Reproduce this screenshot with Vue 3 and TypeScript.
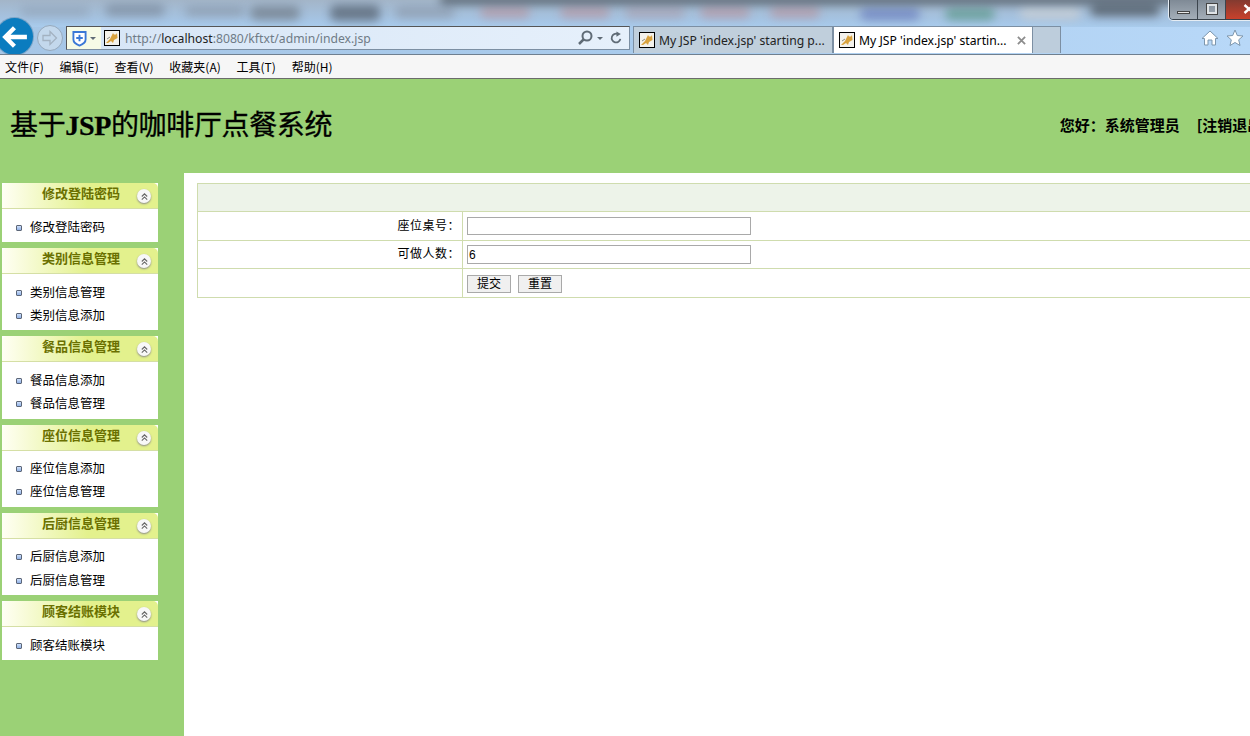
<script setup lang="ts">
const menus = ['文件(F)', '编辑(E)', '查看(V)', '收藏夹(A)', '工具(T)', '帮助(H)']
const groups = [
  { title: '修改登陆密码', items: ['修改登陆密码'] },
  { title: '类别信息管理', items: ['类别信息管理', '类别信息添加'] },
  { title: '餐品信息管理', items: ['餐品信息添加', '餐品信息管理'] },
  { title: '座位信息管理', items: ['座位信息添加', '座位信息管理'] },
  { title: '后厨信息管理', items: ['后厨信息添加', '后厨信息管理'] },
  { title: '顾客结账模块', items: ['顾客结账模块'] },
]
const blurs = [
  { l: 20, t: 6, w: 70, h: 10, c: '#93a6bb' }, { l: 105, t: 4, w: 60, h: 12, c: '#7f8fa2' }, { l: 185, t: 6, w: 60, h: 10, c: '#8b9bae' },
  { l: 250, t: 6, w: 50, h: 14, c: '#75818e' }, { l: 330, t: 5, w: 50, h: 16, c: '#5b6877' }, { l: 395, t: 6, w: 60, h: 12, c: '#8e9db0' },
  { l: 480, t: 6, w: 50, h: 12, c: '#b39aa8' }, { l: 560, t: 6, w: 50, h: 12, c: '#b39aa8' }, { l: 625, t: 6, w: 60, h: 12, c: '#a8a4b6' },
  { l: 700, t: 6, w: 50, h: 12, c: '#b39aa8' }, { l: 770, t: 6, w: 50, h: 12, c: '#b39aa8' }, { l: 860, t: 8, w: 60, h: 12, c: '#6d82c0' },
  { l: 945, t: 8, w: 50, h: 12, c: '#5f9a8e' }, { l: 1020, t: 6, w: 60, h: 14, c: '#c6ced6' }, { l: 1090, t: 4, w: 70, h: 12, c: '#4c5660' },
  { l: 440, t: -4, w: 780, h: 8, c: '#3f4a55' },
]
</script>

<template>
  <div class="page">
    <header class="chrome">
      <div class="blur-layer">
        <span v-for="b in blurs" :key="b.l" class="blur" :style="{ left: b.l + 'px', top: b.t + 'px', width: b.w + 'px', height: b.h + 'px', background: b.c }"></span>
      </div>
      <div class="win-btns">
        <span class="win min"><i></i></span>
        <span class="win max"><i></i></span>
        <span class="win close">
          <svg viewBox="0 0 12 12" width="12" height="12"><path d="M1.500 2 L10.500 10 M10.500 2 L1.500 10" stroke="#fff" stroke-width="2.400"/></svg>
        </span>
      </div>
      <div class="nav">
        <div class="back">
          <svg viewBox="0 0 24 24" width="26" height="26"><path d="M11.500 3.500 L3 12 L11.500 20.500 M3.500 12 H23" fill="none" stroke="#fff" stroke-width="4"/></svg>
        </div>
        <div class="forward">
          <svg viewBox="0 0 20 20" width="20" height="20"><path d="M10 3.500 L16.500 10 L10 16.500 V12.500 H3 V7.500 H10 Z" fill="none" stroke="#a3b2c1" stroke-width="1.300"/></svg>
        </div>
        <div class="address">
          <div class="shield">
            <svg viewBox="0 0 16 18" width="15" height="17"><path d="M1.500 2 H14.500 V10 Q14.500 14 8 16.500 Q1.500 14 1.500 10 Z" fill="#fff" stroke="#3a78d6" stroke-width="2"/><path d="M8 5 V12 M4.500 8.500 H11.500" stroke="#3a78d6" stroke-width="2"/></svg>
            <span class="caret"></span>
          </div>
          <svg class="fav" viewBox="0 0 16 16" width="16" height="16"><rect x=".5" y=".5" width="15" height="15" fill="#f4f2ec" stroke="#000"/><path d="M2 13 L6 9 L8 5 L9 3 L10 4.500 L12 4.500 L13 3 L13.500 8 L10 10 L9 13 L7 11 L4 13 Z" fill="#d9a23d"/><path d="M3 9 L6 7" stroke="#8a8a80"/></svg>
          <span class="url"><span class="dim">http://</span>localhost<span class="dim">:8080/kftxt/admin/index.jsp</span></span>
          <svg class="tool" viewBox="0 0 16 16" width="16" height="16"><circle cx="10" cy="6" r="4.500" fill="none" stroke="#5f6b76" stroke-width="2"/><path d="M7 9 L2 14" stroke="#5f6b76" stroke-width="2.500"/></svg>
          <span class="caret"></span>
          <svg class="tool refresh" viewBox="0 0 16 16" width="14" height="14"><path d="M13 9 A5 5 0 1 1 10 3.500" fill="none" stroke="#5f6b76" stroke-width="2"/><path d="M8.500 0.500 L13.500 3.500 L8.500 6.500 Z" fill="#5f6b76"/></svg>
        </div>
        <div class="tab inactive">
          <svg class="fav" viewBox="0 0 16 16" width="16" height="16"><rect x=".5" y=".5" width="15" height="15" fill="#f4f2ec" stroke="#000"/><path d="M2 13 L6 9 L8 5 L9 3 L10 4.500 L12 4.500 L13 3 L13.500 8 L10 10 L9 13 L7 11 L4 13 Z" fill="#d9a23d"/><path d="M3 9 L6 7" stroke="#8a8a80"/></svg>
          <span class="tab-text">My JSP 'index.jsp' starting p...</span>
        </div>
        <div class="tab active">
          <svg class="fav" viewBox="0 0 16 16" width="16" height="16"><rect x=".5" y=".5" width="15" height="15" fill="#f4f2ec" stroke="#000"/><path d="M2 13 L6 9 L8 5 L9 3 L10 4.500 L12 4.500 L13 3 L13.500 8 L10 10 L9 13 L7 11 L4 13 Z" fill="#d9a23d"/><path d="M3 9 L6 7" stroke="#8a8a80"/></svg>
          <span class="tab-text">My JSP 'index.jsp' startin...</span>
          <svg class="tab-x" viewBox="0 0 10 10" width="9" height="9"><path d="M1 1 L9 9 M9 1 L1 9" stroke="#8d8d8d" stroke-width="2"/></svg>
        </div>
        <div class="new-tab"></div>
        <div class="right-icons">
          <svg viewBox="0 0 18 18" width="18" height="18"><path d="M9 2 L17 9.500 H14.500 V16 H11 V11 H7 V16 H3.500 V9.500 H1 Z" fill="#fff" stroke="#7d96ad"/></svg>
          <svg viewBox="0 0 18 18" width="18" height="18"><path d="M9 1 L11.300 6.500 L17 7 L12.700 10.800 L14 16.500 L9 13.500 L4 16.500 L5.300 10.800 L1 7 L6.700 6.500 Z" fill="#fff" stroke="#7d96ad"/></svg>
        </div>
      </div>
      <nav class="menu">
        <span v-for="m in menus" :key="m">{{ m }}</span>
      </nav>
    </header>

    <div class="banner">
      <h1 class="title">基于<b>JSP</b>的咖啡厅点餐系统</h1>
      <div class="user">
        <span>您好：系统管理员</span>
        <span class="logout">[注销退出]</span>
      </div>
    </div>

    <div class="body">
      <aside class="side">
        <section v-for="g in groups" :key="g.title" class="group">
          <div class="group-head">
            <span class="group-title">{{ g.title }}</span>
            <span class="collapse">
              <svg viewBox="0 0 10 10" width="9" height="9"><path d="M2 5 L5 2 L8 5 M2 8.500 L5 5.500 L8 8.500" fill="none" stroke="#666" stroke-width="1.200"/></svg>
            </span>
          </div>
          <ul class="items">
            <li v-for="i in g.items" :key="i"><span class="bullet"></span>{{ i }}</li>
          </ul>
        </section>
      </aside>
      <main class="main">
        <table class="form">
          <colgroup>
            <col class="col-label" />
            <col />
          </colgroup>
          <tbody>
            <tr class="head"><td colspan="2"></td></tr>
            <tr class="row-a"><td class="label">座位桌号：</td><td class="field"><input class="inp" type="text" value="" /></td></tr>
            <tr class="row-b"><td class="label">可做人数：</td><td class="field"><input class="inp" type="text" value="6" /></td></tr>
            <tr class="row-c"><td class="label"></td><td class="field"><button class="btn">提交</button><button class="btn">重置</button></td></tr>
          </tbody>
        </table>
      </main>
    </div>
  </div>
</template>

<style>
html, body { margin: 0; padding: 0; overflow: hidden; background: #fff; }
</style>

<style scoped>
.page {
  width: 1250px;
  height: 736px;
  display: flex;
  flex-direction: column;
  overflow: hidden;
  font-family: "Noto Sans CJK SC", "Liberation Sans", sans-serif;
  font-size: 12px;
  color: #000;
}
.chrome {
  position: relative;
  height: 79px;
  flex: none;
  display: flex;
  flex-direction: column;
  justify-content: flex-end;
  background: linear-gradient(90deg, #a6c6e6 0%, #a9cbec 50%, #b8d8f8 100%);
  overflow: hidden;
}
.blur-layer { position: absolute; inset: 0 0 auto 0; height: 27px; overflow: hidden; background: linear-gradient(180deg, #a3b5c8 0, #a5c3e2 70%, #a9cbec 100%); }
.blur { position: absolute; filter: blur(5px); opacity: .8; border-radius: 6px; }
.win-btns { position: absolute; top: -2px; left: 1169px; display: flex; width: 110px; height: 20px; border: 1px solid #38414a; border-radius: 0 0 4px 4px; overflow: hidden; box-shadow: 0 0 0 1px #e6edf4; }
.win { display: flex; align-items: center; justify-content: center; height: 20px; box-sizing: border-box; background: linear-gradient(180deg, #7d8894, #a4aeb8); border-right: 1px solid #3c454e; width: 28px; }
.win.close { flex: 1; justify-content: flex-start; padding-left: 17px; background: linear-gradient(180deg, #7f3a30, #c9412c); border: 0; }
.min i { display: block; width: 11px; height: 1px; background: #e8e8e8; margin-top: 6px; border: 1px solid #444; }
.max i { display: block; width: 6px; height: 6px; border: 2px solid #dfe3e6; outline: 1px solid #444; }
.nav { position: relative; height: 27px; display: flex; align-items: center; }
.back { position: absolute; left: -4px; top: -9px; width: 37px; height: 37px; border-radius: 50%; background: #0b7cbf; display: flex; align-items: center; justify-content: center; overflow: hidden; box-shadow: 0 0 0 1px #7ea6c8; }
.forward { position: absolute; left: 37px; top: -2px; width: 26px; height: 26px; box-sizing: border-box; border: 1px solid #96a9bc; border-radius: 50%; display: flex; align-items: center; justify-content: center; background: #c3d8ec; }
.address {
  position: absolute; left: 66px; top: -1px; width: 564px; height: 24px;
  box-sizing: border-box; border: 1px solid #7c8fa3; border-left-color: #555; border-top-color: #555;
  background: linear-gradient(90deg, #d6e5f6, #e6f0fb);
  display: flex; align-items: center;
}
.shield { width: 34px; height: 22px; background: #f6fbe6; display: flex; align-items: center; gap: 3px; padding-left: 5px; box-sizing: border-box; flex: none; }
.caret { display: block; width: 0; height: 0; border: 3px solid transparent; border-top: 3px solid #5f6b76; border-bottom: 0; flex: none; }
.address .fav { margin-left: 3px; flex: none; }
.url { font-family: "Noto Sans", "Liberation Sans", sans-serif; font-size: 12.200px; margin-left: 5px; color: #222; flex: 1; white-space: nowrap; }
.dim { color: #6f7b86; }
.tool { flex: none; }
.address > .caret { margin: 0 6px 0 4px; }
.refresh { margin-right: 6px; }
.tab {
  position: absolute; top: -1px; height: 27px; width: 200px; box-sizing: border-box;
  display: flex; align-items: center; padding-left: 5px;
  font-family: "Noto Sans", "Liberation Sans", sans-serif; font-size: 12.200px; color: #222;
  border: 1px solid #7c8fa3; border-bottom: 0;
}
.tab .fav { flex: none; }
.tab-text { margin-left: 4px; white-space: nowrap; }
.inactive { left: 633px; background: #c0cfdc; }
.active { left: 833px; background: #fff; color: #000; }
.tab-x { margin-left: 10px; flex: none; }
.new-tab { position: absolute; left: 1033px; top: -1px; width: 28px; height: 27px; background: #bdcddc; border: 1px solid #7c8fa3; border-left: 0; border-bottom: 0; box-sizing: border-box; }
.right-icons { position: absolute; left: 1201px; top: 2px; display: flex; gap: 7px; }
.menu {
  height: 25px; box-sizing: border-box; flex: none;
  background: #f6f6f6; border-top: 1px solid #6f7f8f; border-bottom: 1px solid #6b6b6b;
  display: flex; align-items: center; padding-left: 5px; gap: 15.800px;
  position: relative; font-size: 12px;
}
.banner {
  height: 94px; flex: none; box-sizing: border-box;
  background: #9bd176;
  display: flex; align-items: center; justify-content: space-between;
  padding: 0 0 0 10px; white-space: nowrap; overflow: hidden;
}
.title { margin: 0 0 6px; font-size: 28px; font-weight: 400; -webkit-text-stroke: .3px #000; letter-spacing: -.35px; font-family: "Noto Sans CJK SC", sans-serif; }
.title b { font-family: "Liberation Serif", serif; font-weight: 700; }
.user { display: flex; gap: 17px; font-size: 15px; font-weight: 700; margin-right: -18px; margin-bottom: 4px; }
.body { flex: 1; display: flex; min-height: 0; }
.side { width: 184px; flex: none; background: #9bd176; padding: 10px 26px 0 2px; box-sizing: border-box; display: flex; flex-direction: column; gap: 6px; }
.group { background: #fff; }
.group-head {
  height: 26px; box-sizing: border-box; position: relative;
  background: linear-gradient(90deg, #fffff4 0, #e3f18d 55%, #e3f18d 100%);
  border-radius: 5px 5px 0 0; border-bottom: 1px solid #d5dfa5;
  display: flex; align-items: center; justify-content: center;
  padding: 0 0 6px 2px;
}
.group-title { font-size: 13px; font-weight: 700; color: #6a7000; }
.collapse { position: absolute; right: 7px; top: 6px; width: 14px; height: 14px; border-radius: 50%; background: #f8f8f8; box-shadow: 0 1px 2px #888; display: flex; align-items: center; justify-content: center; }
.items { list-style: none; margin: 0; padding: 5.500px 0 4.250px; }
.items li { height: 23.250px; display: flex; align-items: center; padding-left: 14px; font-size: 12.500px; }
.bullet { width: 4px; height: 4px; background: linear-gradient(180deg, #cfe0fa, #8fb0e6); border: 1px solid #5c6678; border-radius: 1px; margin-right: 8px; flex: none; margin-top: 3px; }
.main { flex: 1; background: #fff; padding: 10px 0 0 13px; overflow: hidden; }
.form { border-collapse: collapse; width: 1100px; table-layout: fixed; }
.col-label { width: 265px; }
.form td { border: 1px solid #cfdcae; padding: 0; }
.head td { height: 27px; background: #edf3e9; }
.row-a td { height: 28px; }
.row-b td { height: 27px; }
.row-c td { height: 28px; }
.label { text-align: right; padding-right: 2px !important; font-size: 12px; letter-spacing: .5px; box-sizing: border-box; }
.row-a .label { padding-bottom: 4px !important; }
.row-b .label { padding-bottom: 4px !important; }
.field { padding-left: 4px !important; }
.inp { display: block; width: 284px; height: 18px; box-sizing: border-box; border: 1px solid #a9a9a9; padding: 0 1px; font-size: 12px; font-family: "Liberation Sans", sans-serif; outline: 0; background: #fff; }
.row-b .inp { height: 19px; }
.btn { width: 44px; height: 18px; padding: 0 0 2px; margin-right: 7px; box-sizing: border-box; border: 1px solid #a9a9a9; background: #f0f0f0; font-family: inherit; font-size: 12px; line-height: 14px; color: #000; vertical-align: middle; }
</style>
